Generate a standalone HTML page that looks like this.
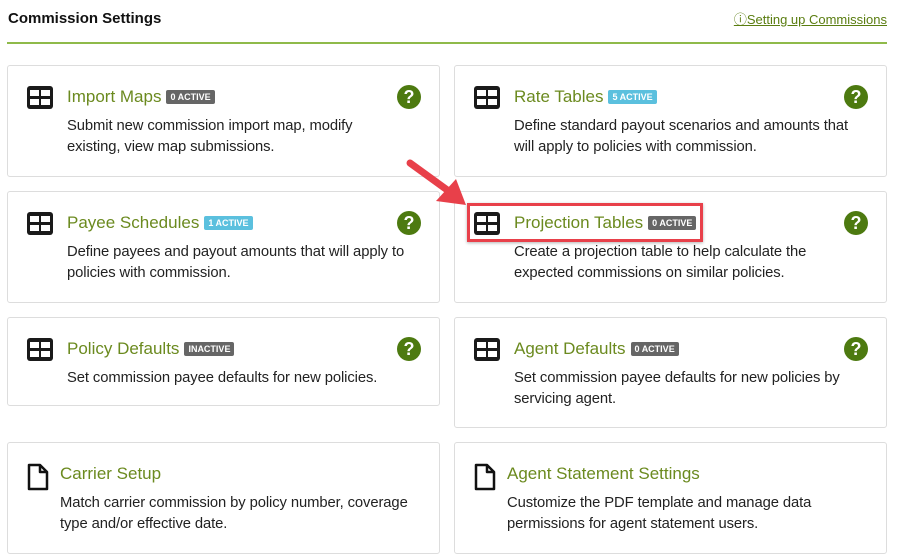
<!DOCTYPE html>
<html><head><style>
body{margin:0;width:897px;height:560px;background:#fff;font-family:"Liberation Sans",sans-serif;position:relative;overflow:hidden;color:#222}
.h{position:absolute;left:8px;top:10px;font-size:15px;font-weight:bold;color:#111}
.lnk{position:absolute;right:10px;top:9px;font-size:13px;color:#5a7d10;text-decoration:underline}
.rule{position:absolute;left:7px;top:42px;width:880px;height:2px;background:#8fba4a}
.card{position:absolute;border:1px solid #ddd;border-radius:3px;background:#fff}
.ic{position:absolute;left:19px;top:20px;width:26px;height:23px;background:#1a1a1a;border-radius:3px}
.ic i{position:absolute;background:#fff;width:9px;height:6px}
.t{position:absolute;left:59px;top:21px;font-size:17px;color:#6b8a1f;white-space:nowrap}
.b{display:inline-block;font-size:9px;font-weight:bold;color:#fff;background:#666;border-radius:2px;padding:2px 4px;vertical-align:2px;margin-left:5px}
.b.blue{background:#5bc0de}
.d{position:absolute;left:59px;top:50px;font-size:14.8px;line-height:21px;color:#222;white-space:nowrap;letter-spacing:-0.1px}
.q{position:absolute;right:18px;top:19px;width:24px;height:24px;border-radius:50%;background:#4d7a10;color:#fff;font-weight:bold;font-size:18px;text-align:center;line-height:24px}
.doc{position:absolute;left:19px;top:20px}
</style></head><body>
<div class="h">Commission Settings</div>
<div class="lnk">ⓘSetting up Commissions</div>
<div class="rule"></div>

<div class="card" style="left:7px;top:65px;width:431px;height:110px">
<div class="ic"><i style="left:3px;top:4px"></i><i style="left:14px;top:4px"></i><i style="left:3px;top:13px"></i><i style="left:14px;top:13px"></i></div>
<div class="t">Import Maps<span class="b">0 ACTIVE</span></div>
<div class="d">Submit new commission import map, modify<br>existing, view map submissions.</div><div class="q">?</div></div>

<div class="card" style="left:454px;top:65px;width:431px;height:110px">
<div class="ic"><i style="left:3px;top:4px"></i><i style="left:14px;top:4px"></i><i style="left:3px;top:13px"></i><i style="left:14px;top:13px"></i></div>
<div class="t">Rate Tables<span class="b blue">5 ACTIVE</span></div>
<div class="d">Define standard payout scenarios and amounts that<br>will apply to policies with commission.</div><div class="q">?</div></div>

<div class="card" style="left:7px;top:191px;width:431px;height:110px">
<div class="ic"><i style="left:3px;top:4px"></i><i style="left:14px;top:4px"></i><i style="left:3px;top:13px"></i><i style="left:14px;top:13px"></i></div>
<div class="t">Payee Schedules<span class="b blue">1 ACTIVE</span></div>
<div class="d">Define payees and payout amounts that will apply to<br>policies with commission.</div><div class="q">?</div></div>

<div class="card" style="left:454px;top:191px;width:431px;height:110px">
<div class="ic"><i style="left:3px;top:4px"></i><i style="left:14px;top:4px"></i><i style="left:3px;top:13px"></i><i style="left:14px;top:13px"></i></div>
<div class="t">Projection Tables<span class="b">0 ACTIVE</span></div>
<div class="d">Create a projection table to help calculate the<br>expected commissions on similar policies.</div><div class="q">?</div></div>

<div class="card" style="left:7px;top:317px;width:431px;height:87px">
<div class="ic"><i style="left:3px;top:4px"></i><i style="left:14px;top:4px"></i><i style="left:3px;top:13px"></i><i style="left:14px;top:13px"></i></div>
<div class="t">Policy Defaults<span class="b">INACTIVE</span></div>
<div class="d">Set commission payee defaults for new policies.</div><div class="q">?</div></div>

<div class="card" style="left:454px;top:317px;width:431px;height:109px">
<div class="ic"><i style="left:3px;top:4px"></i><i style="left:14px;top:4px"></i><i style="left:3px;top:13px"></i><i style="left:14px;top:13px"></i></div>
<div class="t">Agent Defaults<span class="b">0 ACTIVE</span></div>
<div class="d">Set commission payee defaults for new policies by<br>servicing agent.</div><div class="q">?</div></div>

<div class="card" style="left:7px;top:442px;width:431px;height:110px">
<svg class="doc" width="22" height="28" viewBox="0 0 22 28"><path d="M2 2H13L20 9V26H2Z M13 2V9H20" fill="#fff" stroke="#111" stroke-width="2.5" stroke-linejoin="round"/></svg>
<div class="t" style="left:52px">Carrier Setup</div>
<div class="d" style="left:52px">Match carrier commission by policy number, coverage<br>type and/or effective date.</div></div>

<div class="card" style="left:454px;top:442px;width:431px;height:110px">
<svg class="doc" width="22" height="28" viewBox="0 0 22 28"><path d="M2 2H13L20 9V26H2Z M13 2V9H20" fill="#fff" stroke="#111" stroke-width="2.5" stroke-linejoin="round"/></svg>
<div class="t" style="left:52px">Agent Statement Settings</div>
<div class="d" style="left:52px">Customize the PDF template and manage data<br>permissions for agent statement users.</div></div>

<div style="position:absolute;left:467px;top:203px;width:236px;height:39px;border:3px solid #e8404a;box-sizing:border-box;box-shadow:0 1px 3px rgba(0,0,0,.3)"></div>
<svg style="position:absolute;left:400px;top:155px" width="75" height="60" viewBox="0 0 75 60">
<line x1="10" y1="8" x2="50" y2="37" stroke="#e8404a" stroke-width="7" stroke-linecap="round"/>
<polygon points="66,50 36,46 56,24" fill="#e8404a"/></svg>
</body></html>
